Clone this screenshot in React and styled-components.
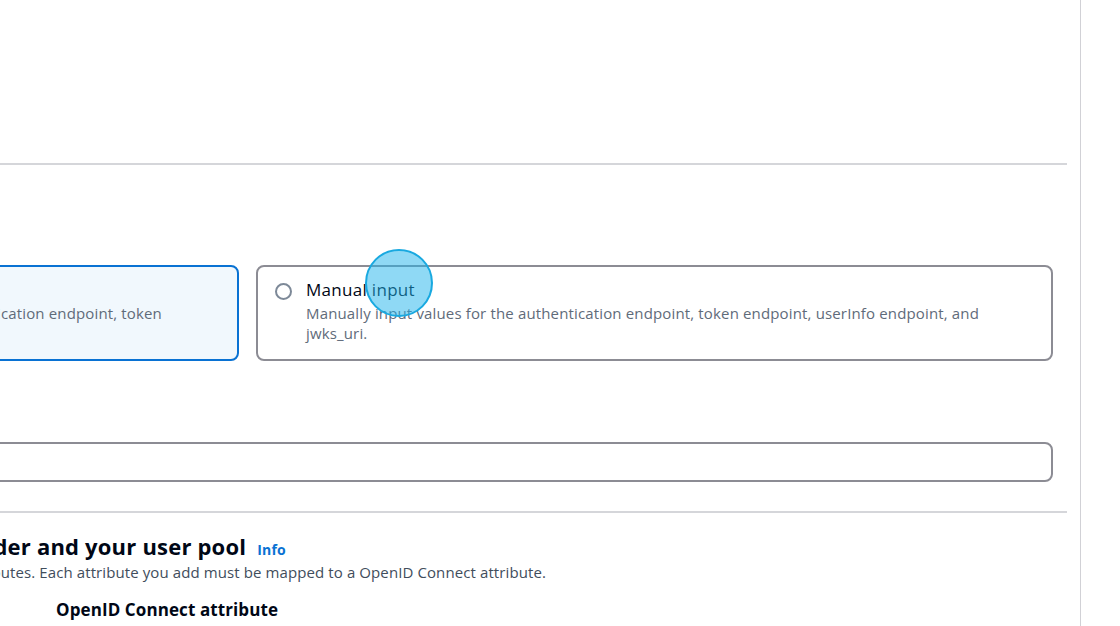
import React from 'react';
import styled, { createGlobalStyle } from 'styled-components';

const GlobalStyle = createGlobalStyle`
  html, body { margin: 0; padding: 0; background: #ffffff; }
  body {
    font-family: "Open Sans", "Noto Sans", sans-serif;
    color: #000716;
    overflow: hidden;
  }
  * { box-sizing: border-box; }
`;

const Page = styled.div`
  position: relative;
  display: flex;
  width: 1120px;
  height: 626px;
  overflow: hidden;
  background: #ffffff;
`;

const Main = styled.main`
  flex: none;
  width: 1625px;
  margin-left: -558px;
  display: flex;
  flex-direction: column;
`;

const TopArea = styled.div`
  height: 163px;
`;

const Divider = styled.hr`
  margin: ${(p) => p.$mt || 0}px 0 0 0;
  border: none;
  height: 2px;
  background: #d5d6da;
`;

const Section = styled.section`
  padding-right: 14px;
  padding-left: ${(p) => p.$pl || 0}px;
  padding-top: ${(p) => p.$pt || 0}px;
`;

const FieldLabel = styled.div`
  font-size: 15px;
  line-height: 22px;
  font-weight: 700;
  color: #000716;
  margin-bottom: ${(p) => p.$mb || 0}px;
`;

const Tiles = styled.div`
  display: grid;
  grid-template-columns: 1fr 1fr;
  gap: 17px;
`;

const Tile = styled.label`
  display: grid;
  grid-template-columns: 17px 1fr;
  column-gap: 14px;
  padding: 13px 17px 16px 17px;
  border: 2px solid ${(p) => (p.$selected ? '#0972d3' : '#8c8c94')};
  background: ${(p) => (p.$selected ? '#f1f8fd' : '#ffffff')};
  border-radius: 8px;
`;

const Radio = styled.span`
  width: 17px;
  height: 17px;
  margin-top: 3px;
  border-radius: 50%;
  border: 2px solid ${(p) => (p.$checked ? '#0972d3' : '#7d8998')};
  display: flex;
  align-items: center;
  justify-content: center;
  &::after {
    content: '';
    display: ${(p) => (p.$checked ? 'block' : 'none')};
    width: 7px;
    height: 7px;
    border-radius: 50%;
    background: #0972d3;
  }
`;

const TileText = styled.div`
  display: flex;
  flex-direction: column;
`;

const TileTitle = styled.span`
  font-size: 17px;
  line-height: 20px;
  letter-spacing: 0.3px;
  color: #000716;
`;

const TileDesc = styled.span`
  margin-top: 3px;
  font-size: 15px;
  line-height: 20px;
  letter-spacing: 0.15px;
  color: #5f6b7a;
`;

const Field = styled.div`
  margin-top: 38px;
`;

const Input = styled.input`
  display: block;
  width: 100%;
  height: 40px;
  border: 2px solid #8c8c94;
  border-radius: 8px;
  background: #ffffff;
  padding: 0 12px;
  font: inherit;
  font-size: 15px;
  color: #000716;
  outline: none;
`;

const Heading = styled.h2`
  margin: 0;
  font-size: 22px;
  line-height: 24px;
  letter-spacing: 0.2px;
  font-weight: 700;
  color: #000716;
`;

const InfoLink = styled.a`
  margin-left: 11px;
  font-size: 14px;
  letter-spacing: 0.2px;
  font-weight: 700;
  color: #0972d3;
  text-decoration: none;
`;

const SectionDesc = styled.p`
  margin: 0;
  font-size: 15px;
  line-height: 20px;
  letter-spacing: 0.1px;
  color: #414d5c;
  white-space: nowrap;
`;

const ColumnHeaders = styled.div`
  display: grid;
  grid-template-columns: 584px 1fr;
  margin-top: 18px;
`;

const ColumnHeader = styled.div`
  font-size: 17px;
  line-height: 20px;
  letter-spacing: 0.1px;
  font-weight: 700;
  color: #000716;
`;

const SidePanel = styled.aside`
  flex: 1;
  margin-left: 13px;
  border-left: 1px solid #d1d1d6;
`;

const ClickMarker = styled.div`
  position: absolute;
  left: 365px;
  top: 249px;
  width: 68px;
  height: 68px;
  border-radius: 50%;
  border: 2px solid #19a9e0;
  background: rgba(31, 179, 235, 0.5);
  pointer-events: none;
`;

export default function App() {
  return (
    <>
      <GlobalStyle />
      <Page>
        <Main>
          <TopArea />
          <Divider />
          <Section $pt={59}>
            <FieldLabel $mb={19}>Setup method</FieldLabel>
            <Tiles>
              <Tile $selected>
                <Radio $checked />
                <TileText>
                  <TileTitle>Auto fill through issuer URL</TileTitle>
                  <TileDesc>
                    Enter the issuer URL to automatically retrieve all values for the authentication endpoint, token
                    endpoint, userInfo endpoint, and jwks_uri.
                  </TileDesc>
                </TileText>
              </Tile>
              <Tile>
                <Radio />
                <TileText>
                  <TileTitle>Manual input</TileTitle>
                  <TileDesc>
                    Manually input values for the authentication endpoint, token endpoint, userInfo endpoint, and
                    jwks_uri.
                  </TileDesc>
                </TileText>
              </Tile>
            </Tiles>
            <Field>
              <FieldLabel $mb={21}>Issuer URL</FieldLabel>
              <Input type="text" aria-label="Issuer URL" />
            </Field>
          </Section>
          <Divider $mt={29} />
          <Section $pt={21} $pl={30}>
            <Heading>
              Map attributes between OpenID Connect provider and your user pool
              <InfoLink href="#">Info</InfoLink>
            </Heading>
            <SectionDesc>
              Attributes are used to identify users in a user pool. Choose user pool attributes. Each attribute you add
              must be mapped to a OpenID Connect attribute.
            </SectionDesc>
            <ColumnHeaders>
              <ColumnHeader>User pool attribute</ColumnHeader>
              <ColumnHeader>OpenID Connect attribute</ColumnHeader>
            </ColumnHeaders>
          </Section>
        </Main>
        <SidePanel />
        <ClickMarker />
      </Page>
    </>
  );
}
